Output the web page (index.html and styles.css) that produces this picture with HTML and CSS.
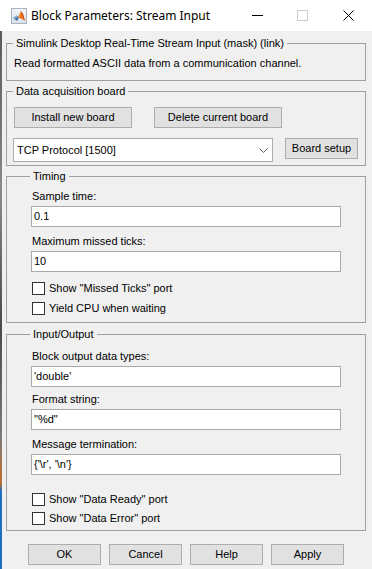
FILE: index.html
```html
<!DOCTYPE html>
<html>
<head>
<meta charset="utf-8">
<link rel="stylesheet" href="styles.css">
</head>
<body>
<div class="window">
  <div class="titlebar">
    <svg class="app-icon" width="16" height="16" viewBox="0 0 16 16">
      <defs>
        <linearGradient id="ibg" x1="0" y1="0" x2="0" y2="1">
          <stop offset="0" stop-color="#f4f6f9"/>
          <stop offset="1" stop-color="#d9e0e8"/>
        </linearGradient>
      </defs>
      <rect x="0.5" y="0.5" width="15" height="15" fill="url(#ibg)" stroke="#a9b4c2"/>
      <polygon points="2,10 6,7.5 8,9.5 6,13" fill="#3f6fa8"/>
      <polygon points="2,10 6,7.5 7,9 4,11" fill="#8fb0d6"/>
      <polygon points="7,9.5 10,3 12,6 14,13 11,11" fill="#e8711f"/>
      <polygon points="10,3 12,6 14,13 12.5,10" fill="#c23b1a"/>
      <polygon points="7,9.5 10,3 9.2,9" fill="#f6a23e"/>
    </svg>
    <span class="title">Block Parameters: Stream Input</span>
    <div class="controls">
      <svg class="ctl ctl-min" width="11" height="11" viewBox="0 0 11 11"><line x1="0" y1="5.5" x2="11" y2="5.5" stroke="#000" stroke-width="1"/></svg>
      <svg class="ctl ctl-max" width="11" height="11" viewBox="0 0 11 11"><rect x="0.5" y="0.5" width="10" height="10" fill="none" stroke="#cccccc" stroke-width="1"/></svg>
      <svg class="ctl ctl-close" width="11" height="11" viewBox="0 0 11 11"><path d="M0.5 0.5 L10.5 10.5 M10.5 0.5 L0.5 10.5" stroke="#000" stroke-width="1"/></svg>
    </div>
  </div>
  <div class="content">
    <div class="strip"></div>
    <div class="main">
      <fieldset class="group g1">
        <legend>Simulink Desktop Real-Time Stream Input (mask) (link)</legend>
        <div class="desc">Read formatted ASCII data from a communication channel.</div>
      </fieldset>

      <fieldset class="group g2">
        <legend>Data acquisition board</legend>
        <div class="btn-row">
          <button class="btn btn-install">Install new board</button>
          <button class="btn btn-delete">Delete current board</button>
        </div>
        <div class="combo-row">
          <div class="combo">
            <span class="combo-text">TCP Protocol [1500]</span>
            <svg class="combo-arrow" width="9" height="5" viewBox="0 0 9 5"><path d="M0.5 0.5 L4.5 4.5 L8.5 0.5" fill="none" stroke="#606060" stroke-width="1"/></svg>
          </div>
          <button class="btn btn-setup">Board setup</button>
        </div>
      </fieldset>

      <fieldset class="group g3">
        <legend>Timing</legend>
        <div class="lbl l-sample">Sample time:</div>
        <div class="field">0.1</div>
        <div class="lbl l-ticks">Maximum missed ticks:</div>
        <div class="field">10</div>
        <div class="check c1"><span class="box"></span><span>Show "Missed Ticks" port</span></div>
        <div class="check c2"><span class="box"></span><span>Yield CPU when waiting</span></div>
      </fieldset>

      <fieldset class="group g4">
        <legend>Input/Output</legend>
        <div class="lbl l-types">Block output data types:</div>
        <div class="field">'double'</div>
        <div class="lbl l-format">Format string:</div>
        <div class="field">"%d"</div>
        <div class="lbl l-term">Message termination:</div>
        <div class="field">{'\r', '\n'}</div>
        <div class="check c3"><span class="box"></span><span>Show "Data Ready" port</span></div>
        <div class="check c4"><span class="box"></span><span>Show "Data Error" port</span></div>
      </fieldset>

      <div class="actions">
        <button class="btn act">OK</button>
        <button class="btn act">Cancel</button>
        <button class="btn act">Help</button>
        <button class="btn act">Apply</button>
      </div>
    </div>
  </div>
</div>
</body>
</html>
```
FILE: styles.css
```css
html, body {
  margin: 0;
  padding: 0;
}
body {
  width: 372px;
  height: 569px;
  overflow: hidden;
  font-family: "Liberation Sans", Arial, sans-serif;
  font-size: 11px;
  color: #000;
}
.window {
  width: 372px;
  height: 569px;
  background: #f0f0f0;
  display: flex;
  flex-direction: column;
}
.titlebar {
  height: 31px;
  background: #fff;
  display: flex;
  align-items: center;
  flex: none;
}
.app-icon {
  margin-left: 11px;
  margin-top: 1px;
}
.title {
  margin-left: 4px;
  font-family: "Noto Sans", "Segoe UI", sans-serif;
  font-size: 12px;
  line-height: 16px;
  color: #000;
}
.controls {
  margin-left: auto;
  display: flex;
  align-items: center;
  height: 31px;
}
.ctl { display: block; }
.ctl-min { margin-right: 34px; margin-top: 0px; }
.ctl-max { margin-right: 35px; }
.ctl-close { margin-right: 18px; }

.content {
  flex: 1;
  display: flex;
}
.strip {
  width: 2px;
  flex: none;
  background: linear-gradient(to bottom, #5a5a5a 0, #8a8a8a 30%, #4a4a4a 55%, #7a7a7a 75%, #c07030 84%, #1f6fc0 85.5%, #1f6fc0 100%);
}
.main {
  flex: 1;
  display: flex;
  flex-direction: column;
}

.group {
  margin: 0 4px 0 4px;
  padding: 0 0 0 7px;
  border: 1px solid #a0a0a0;
  min-width: 0;
  width: 360px;
  box-sizing: border-box;
}
.group legend {
  margin-left: -1px;
  padding: 0 3px;
  font-size: 11px;
  line-height: 13px;
  height: 13px;
}
.g1 { margin-top: 6px; padding-bottom: 10px; }
.g1 .desc { padding-top: 7px; line-height: 13px; }

.g2 { margin-top: 4px; padding-bottom: 3px; }
.btn-row {
  display: flex;
  margin-top: 9px;
}
.btn {
  font-family: "Liberation Sans", Arial, sans-serif;
  font-size: 11px;
  height: 21px;
  padding: 0;
  margin: 0;
  background: #e1e1e1;
  border: 1px solid #adadad;
  color: #000;
  box-sizing: border-box;
  line-height: 19px;
}
.btn-install { width: 118px; }
.btn-delete { width: 128px; margin-left: 22px; }
.combo-row {
  display: flex;
  align-items: flex-start;
  margin-top: 10px;
}
.combo {
  margin-left: -1px;
  width: 260px;
  height: 24px;
  box-sizing: border-box;
  background: #fff;
  border: 1px solid #abadb3;
  display: flex;
  align-items: center;
}
.combo-text {
  padding-left: 3px;
  font-size: 11px;
}
.combo-arrow {
  margin-left: auto;
  margin-right: 4px;
}
.btn-setup { width: 73px; margin-left: 12px; }

.g3 { margin-top: 4px; padding-left: 24px; padding-bottom: 7px; }
.g4 { margin-top: 5px; padding-left: 24px; padding-bottom: 5px; }

.lbl {
  line-height: 13px;
  margin-left: 1px;
}
.field {
  margin-top: 3px;
  width: 310px;
  height: 21px;
  box-sizing: border-box;
  background: #fff;
  border: 1px solid #a9a9a9;
  padding-left: 2px;
  line-height: 19px;
}
.l-sample { margin-top: 7px; }
.l-ticks { margin-top: 8px; }
.l-types { margin-top: 9px; }
.l-format { margin-top: 6px; }
.l-term { margin-top: 8px; }

.check {
  display: flex;
  align-items: center;
  height: 13px;
  margin-left: 1px;
  line-height: 13px;
}
.check .box {
  width: 13px;
  height: 13px;
  box-sizing: border-box;
  border: 1px solid #333;
  background: #fff;
  margin-right: 4px;
  flex: none;
}
.c1 { margin-top: 10px; }
.c2 { margin-top: 7px; }
.c3 { margin-top: 18px; }
.c4 { margin-top: 6px; }

.actions {
  margin-top: 13px;
  display: flex;
  justify-content: center;
  gap: 8px;
  padding-right: 2px;
}
.act { width: 73px; }
```
